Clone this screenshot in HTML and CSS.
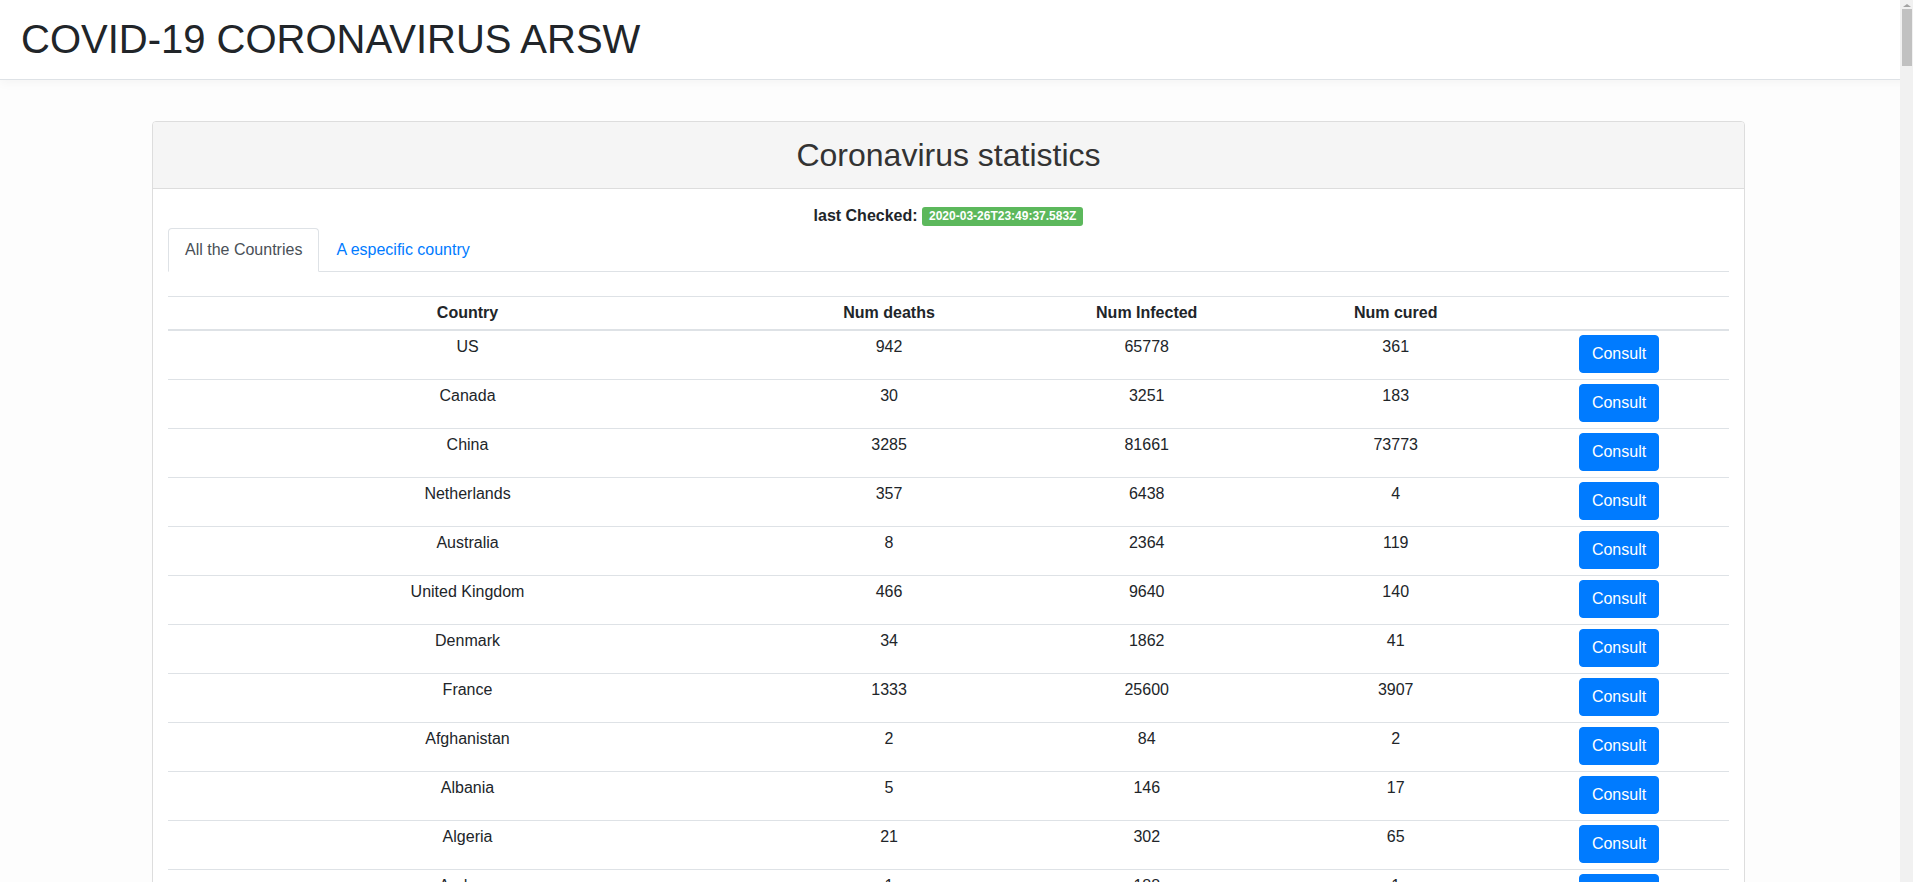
FILE: index.html
```html
<!DOCTYPE html>
<html>
<head>
<meta charset="utf-8">
<title>COVID-19 CORONAVIRUS ARSW</title>
<link rel="stylesheet" href="styles.css">
</head>
<body>
<header class="navbar">
  <h1 class="brand">COVID-19 CORONAVIRUS ARSW</h1>
</header>
<main class="page">
  <section class="panel">
    <div class="panel-heading">
      <h2 class="panel-title">Coronavirus statistics</h2>
    </div>
    <div class="panel-body">
      <p class="checked">last Checked: <span class="label">2020-03-26T23:49:37.583Z</span></p>
      <ul class="tabs">
        <li class="tab active">All the Countries</li>
        <li class="tab">A especific country</li>
      </ul>
      <table class="stats">
        <thead>
          <tr><th class="c-country">Country</th><th class="c-deaths">Num deaths</th><th class="c-infected">Num Infected</th><th class="c-cured">Num cured</th><th class="c-action"></th></tr>
        </thead>
        <tbody>
          <tr><td>US</td><td>942</td><td>65778</td><td>361</td><td><button class="btn">Consult</button></td></tr>
          <tr><td>Canada</td><td>30</td><td>3251</td><td>183</td><td><button class="btn">Consult</button></td></tr>
          <tr><td>China</td><td>3285</td><td>81661</td><td>73773</td><td><button class="btn">Consult</button></td></tr>
          <tr><td>Netherlands</td><td>357</td><td>6438</td><td>4</td><td><button class="btn">Consult</button></td></tr>
          <tr><td>Australia</td><td>8</td><td>2364</td><td>119</td><td><button class="btn">Consult</button></td></tr>
          <tr><td>United Kingdom</td><td>466</td><td>9640</td><td>140</td><td><button class="btn">Consult</button></td></tr>
          <tr><td>Denmark</td><td>34</td><td>1862</td><td>41</td><td><button class="btn">Consult</button></td></tr>
          <tr><td>France</td><td>1333</td><td>25600</td><td>3907</td><td><button class="btn">Consult</button></td></tr>
          <tr><td>Afghanistan</td><td>2</td><td>84</td><td>2</td><td><button class="btn">Consult</button></td></tr>
          <tr><td>Albania</td><td>5</td><td>146</td><td>17</td><td><button class="btn">Consult</button></td></tr>
          <tr><td>Algeria</td><td>21</td><td>302</td><td>65</td><td><button class="btn">Consult</button></td></tr>
          <tr><td>Andorra</td><td>1</td><td>188</td><td>1</td><td><button class="btn">Consult</button></td></tr>
          <tr><td>Angola</td><td>0</td><td>3</td><td>0</td><td><button class="btn">Consult</button></td></tr>
          <tr><td>Antigua and Barbuda</td><td>0</td><td>3</td><td>0</td><td><button class="btn">Consult</button></td></tr>
          <tr><td>Argentina</td><td>12</td><td>502</td><td>52</td><td><button class="btn">Consult</button></td></tr>
          <tr><td>Armenia</td><td>1</td><td>290</td><td>18</td><td><button class="btn">Consult</button></td></tr>
        </tbody>
      </table>
    </div>
  </section>
</main>
<div class="scrollbar" aria-hidden="true">
  <div class="scroll-arrow"></div>
  <div class="scroll-thumb"></div>
</div>
</body>
</html>
```
FILE: styles.css
```css
html, body {
  margin: 0;
  padding: 0;
}
body {
  font-family: "Liberation Sans", Arial, Helvetica, sans-serif;
  font-size: 16px;
  line-height: 1.5;
  color: #212529;
  background: #fdfdfd;
}
.navbar {
  background: #fff;
  border-bottom: 1px solid #dee2e6;
  box-shadow: 0 3px 10px rgba(0, 0, 0, 0.04);
  padding: 15px 30px 16px 21px;
}
.brand {
  margin: 0;
  font-size: 40px;
  font-weight: 400;
  line-height: 48px;
  color: #212529;
}
.page {
  padding: 41px 168px 40px 152px;
}
.panel {
  background: #fff;
  border: 1px solid #ddd;
  border-radius: 4px;
}
.panel-heading {
  background: #f5f5f5;
  border-bottom: 1px solid #ddd;
  border-radius: 3px 3px 0 0;
  padding: 14px 15px;
  text-align: center;
}
.panel-title {
  margin: 0;
  font-size: 32px;
  font-weight: 400;
  line-height: 38px;
  color: #333;
}
.panel-body {
  padding: 15px;
}
.checked {
  margin: 0;
  text-align: center;
  font-weight: 700;
  line-height: 24px;
  color: #212529;
}
.label {
  display: inline-block;
  background: #5cb85c;
  color: #fff;
  font-size: 12px;
  font-weight: 700;
  line-height: 1;
  padding: 3px 7px 4px;
  border-radius: 3px;
  vertical-align: 1px;
}
.tabs {
  list-style: none;
  margin: 0;
  padding: 0;
  display: flex;
  border-bottom: 1px solid #dee2e6;
}
.tab {
  padding: 8px 16px;
  line-height: 26px;
  color: #007bff;
  border: 1px solid transparent;
  border-radius: 4px 4px 0 0;
  margin-bottom: -1px;
}
.tab.active {
  color: #495057;
  background: #fff;
  border-color: #dee2e6 #dee2e6 #fff;
}
.stats {
  width: 100%;
  margin-top: 24px;
  border-collapse: collapse;
  table-layout: fixed;
}
.stats th,
.stats td {
  text-align: center;
  vertical-align: top;
  padding: 4.4px 4.8px 5.6px;
  border-top: 1px solid #dee2e6;
}
.stats th {
  font-weight: 700;
  border-bottom: 2px solid #dee2e6;
  vertical-align: bottom;
  padding: 3.6px 4.8px 4.4px;
}
.c-country { width: 38.94%; }
.c-deaths { width: 15.5%; }
.c-infected { width: 17.3%; }
.c-cured { width: 14.35%; }
.c-action { width: 13.91%; }
.btn {
  font-family: inherit;
  font-size: 16px;
  line-height: 24px;
  color: #fff;
  background: #007bff;
  border: 1px solid #007bff;
  border-radius: 4px;
  padding: 6px 12px;
  cursor: pointer;
}
.scrollbar {
  position: fixed;
  top: 0;
  right: 0;
  width: 13px;
  height: 100%;
  background: #f1f1f1;
}
.scroll-arrow {
  margin: 4px auto 0;
  width: 0;
  height: 0;
  border-left: 4px solid transparent;
  border-right: 4px solid transparent;
  border-bottom: 3px solid #a3a3a3;
}
.scroll-thumb {
  margin: 2px 0 0 2px;
  width: 10px;
  height: 57px;
  background: #c1c1c1;
}
```
